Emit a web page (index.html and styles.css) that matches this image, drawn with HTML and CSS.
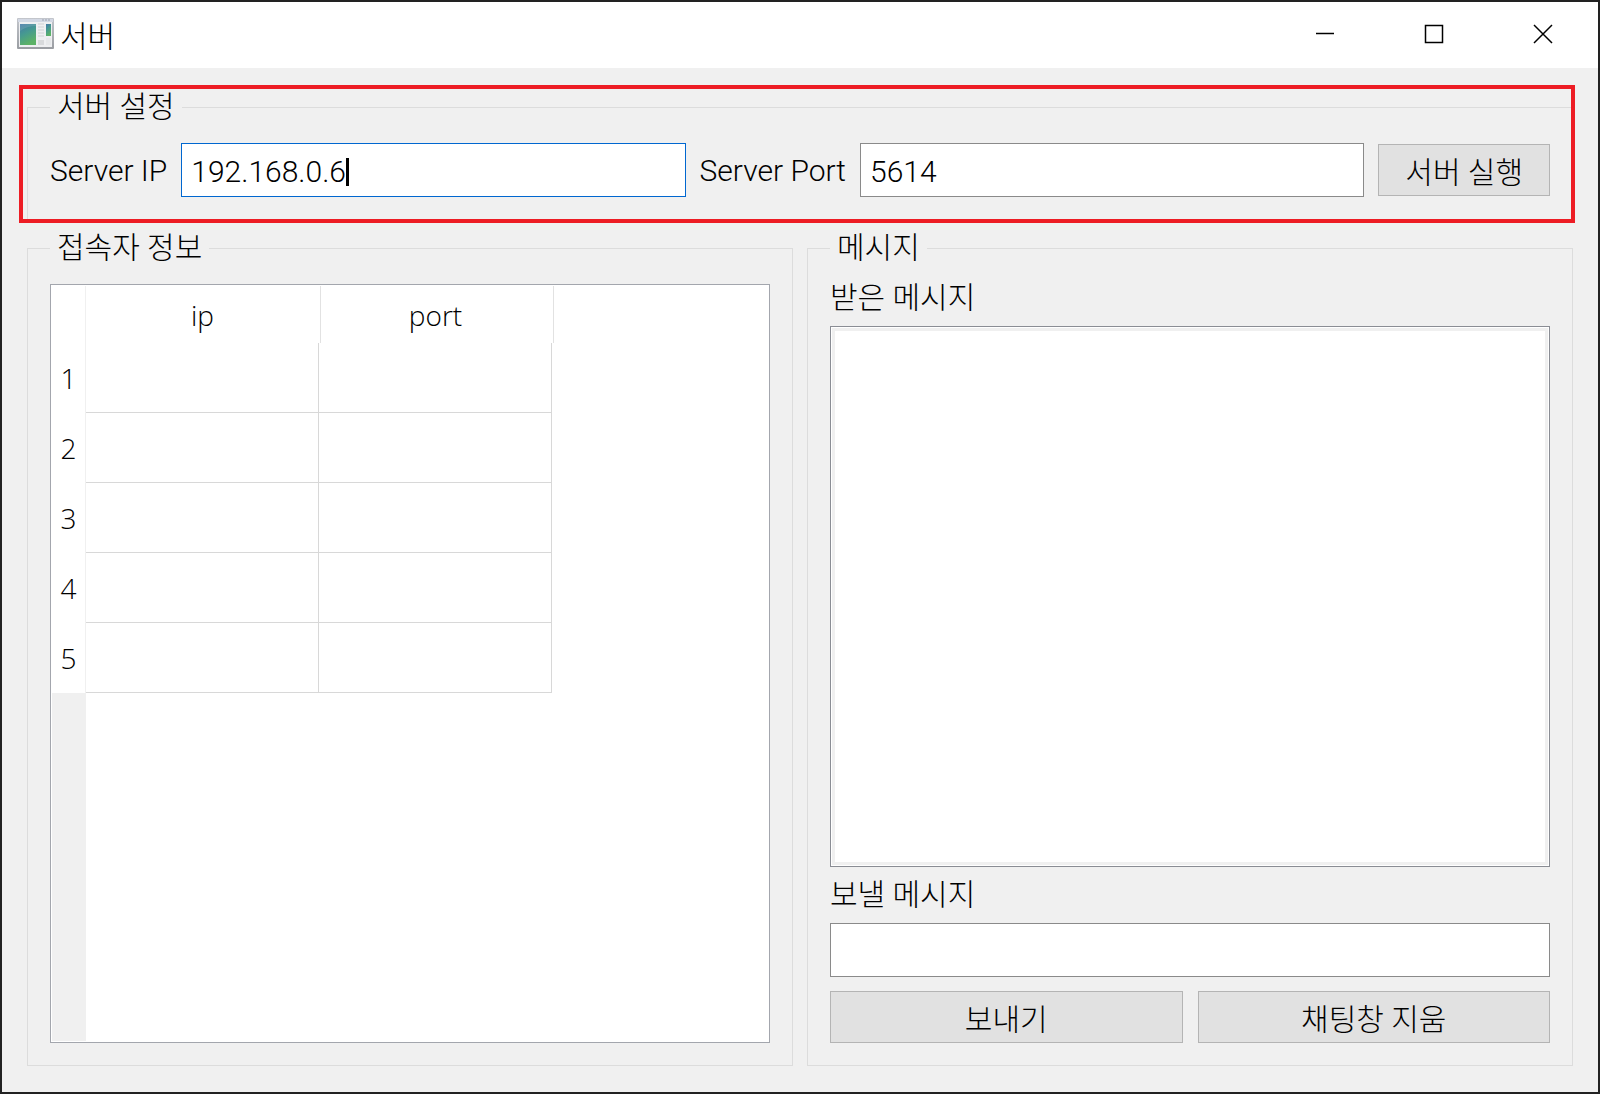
FILE: index.html
```html
<!DOCTYPE html>
<html lang="ko">
<head>
    <meta charset="UTF-8" />
    <meta name="viewport" content="width=device-width, initial-scale=1.0" />
    <title>서버</title>
    <link rel="stylesheet" href="styles.css">
</head>
<body>
    <header class="titlebar">
        <svg class="app-icon" width="38" height="32" viewBox="0 0 38 32" aria-hidden="true">
            <defs>
                <linearGradient id="frame" x1="0" y1="0" x2="0" y2="1">
                    <stop offset="0" stop-color="#c3c6cc" />
                    <stop offset="1" stop-color="#9a9da2" />
                </linearGradient>
                <linearGradient id="screen" x1="0" y1="0" x2="0.4" y2="1">
                    <stop offset="0" stop-color="#4478a8" />
                    <stop offset="0.5" stop-color="#469a90" />
                    <stop offset="1" stop-color="#5cb266" />
                </linearGradient>
            </defs>
            <rect x="0" y="0" width="37" height="31" rx="1" fill="url(#frame)" />
            <rect x="1" y="1" width="35" height="3" fill="#d3d8e4" />
            <path d="M25 2h9" stroke="#9ca2ae" stroke-dasharray="2 1" />
            <rect x="2" y="4" width="33" height="25" fill="#eeeff1" />
            <rect x="3" y="6" width="16" height="21" fill="url(#screen)" />
            <path d="M3 13q7-5 16-5v-2h-16z" fill="#fff" opacity="0.12" />
            <path d="M21 6h6M21 9h6M21 12h6M21 15h6M21 18h6" stroke="#cfd1d4" />
            <rect x="21" y="22" width="6" height="5" fill="#d8dadc" />
            <rect x="29" y="6" width="5" height="12" fill="url(#screen)" />
            <rect x="29" y="20" width="5" height="7" fill="#e6e8ea" />
        </svg>
        <h1>서버</h1>
        <div class="window-buttons">
            <button type="button" aria-label="최소화">
                <svg width="20" height="20" viewBox="0 0 20 20"><path d="M1 9.5h18" /></svg>
            </button>
            <button type="button" aria-label="최대화">
                <svg width="20" height="20" viewBox="0 0 20 20"><rect x="1.5" y="1.5" width="17" height="17" /></svg>
            </button>
            <button type="button" aria-label="닫기">
                <svg width="20" height="20" viewBox="0 0 20 20"><path d="M1 1l18 18M19 1L1 19" /></svg>
            </button>
        </div>
    </header>

    <main>
        <div class="highlight">
            <fieldset>
                <legend>서버 설정</legend>
                <div class="server-row">
                    <label for="server-ip">Server IP</label>
                    <div class="field">
                        <input type="text" id="server-ip" class="active" value="192.168.0.6" autocomplete="off">
                        <span class="caret"></span>
                    </div>
                    <label for="server-port">Server Port</label>
                    <div class="field">
                        <input type="text" id="server-port" value="5614" autocomplete="off">
                    </div>
                    <button type="button" id="start" class="btn">서버 실행</button>
                </div>
            </fieldset>
        </div>

        <div class="panels">
            <fieldset>
                <legend>접속자 정보</legend>
                <div class="client-list">
                    <table>
                        <thead>
                            <tr>
                                <td class="corner"></td>
                                <th scope="col">ip</th>
                                <th scope="col">port</th>
                            </tr>
                        </thead>
                        <tbody>
                            <tr><th scope="row">1</th><td></td><td></td></tr>
                            <tr><th scope="row">2</th><td></td><td></td></tr>
                            <tr><th scope="row">3</th><td></td><td></td></tr>
                            <tr><th scope="row">4</th><td></td><td></td></tr>
                            <tr><th scope="row">5</th><td></td><td></td></tr>
                        </tbody>
                    </table>
                </div>
            </fieldset>

            <fieldset>
                <legend>메시지</legend>
                <div class="messages">
                    <label for="received">받은 메시지</label>
                    <textarea id="received" readonly></textarea>
                    <label for="message">보낼 메시지</label>
                    <input type="text" id="message" autocomplete="off">
                    <div class="actions">
                        <button type="button" id="send" class="btn">보내기</button>
                        <button type="button" id="clear" class="btn">채팅창 지움</button>
                    </div>
                </div>
            </fieldset>
        </div>
    </main>
</body>
</html>
```

FILE: styles.css
```css
* {
    box-sizing: border-box;
    margin: 0;
    padding: 0;
}

body {
    font-family: Roboto, "Noto Sans CJK KR", sans-serif;
    font-size: 30px;
    font-weight: 300;
    color: #000;
    background: #f0f0f0;
    border: 2px solid #222;
    min-height: 100vh;
    display: flex;
    flex-direction: column;
}

input,
button,
textarea {
    font: inherit;
    color: inherit;
}

.titlebar {
    display: flex;
    align-items: center;
    height: 66px;
    padding: 0 1px 2px 15px;
    background: #fff;
}

.titlebar h1 {
    flex: 1;
    margin-left: 5px;
    font-size: 30px;
    font-weight: 300;
}

.window-buttons {
    display: flex;
}

.window-buttons button {
    display: flex;
    align-items: center;
    justify-content: center;
    width: 109px;
    height: 64px;
    border: none;
    background: none;
}

.window-buttons svg {
    fill: none;
    stroke: #000;
    stroke-width: 1.5;
}

main {
    flex: 1;
    display: flex;
    flex-direction: column;
    gap: 10px;
    padding: 21px 25px 26px;
}

fieldset {
    display: flex;
    flex-direction: column;
    min-width: 0;
    border: 1px solid #dcdcdc;
    padding: 18px 22px 22px;
}

legend {
    padding: 0 7px;
    line-height: 36px;
}

/* red frame around the server settings */
.highlight {
    position: relative;
}

.highlight::after {
    content: "";
    position: absolute;
    inset: -4px -2px -3px -8px;
    border: 4px solid #ed1c24;
    pointer-events: none;
}

.server-row {
    display: flex;
    align-items: center;
    gap: 14px;
}

.field {
    position: relative;
    flex: 1;
}

input {
    display: block;
    width: 100%;
    height: 54px;
    padding: 2px 9px 0;
    border: 1px solid #8a8a8a;
    background: #fff;
    outline: none;
}

input.active {
    border-color: #0067d0;
}

.caret {
    position: absolute;
    top: 15px;
    left: 165px;
    width: 3px;
    height: 28px;
    background: #000;
}

.btn {
    height: 52px;
    border: 1px solid #b4b4b4;
    background: #e1e1e1;
}

.server-row .btn {
    padding: 0 26px;
}

.panels {
    flex: 1;
    display: grid;
    grid-template-columns: 1fr 1fr;
    gap: 14px;
}

.client-list {
    flex: 1;
    padding: 1px;
    border: 1px solid #a3a6ad;
    background: linear-gradient(#f0f0f0, #f0f0f0) 1px 1px / 34px calc(100% - 2px) no-repeat #fff;
}

table {
    width: 500px;
    table-layout: fixed;
    border-collapse: separate;
    border-spacing: 0;
    font-family: "Open Sans", "Noto Sans", sans-serif;
    font-size: 28px;
}

th {
    font-weight: 350;
    text-align: center;
}

thead th {
    position: relative;
    height: 57px;
}

/* header dividers sit slightly right of the grid lines */
thead th::after {
    content: "";
    position: absolute;
    top: 0;
    right: -2px;
    bottom: 0;
    width: 1px;
    background: #e2e2e2;
}

.corner {
    width: 34px;
    background: #fff;
    border-right: 1px solid #f0f0f0;
}

tbody th {
    background: #fff;
    border-right: 1px solid #f0f0f0;
}

tbody td {
    height: 70px;
    border-right: 1px solid #d8d8d8;
    border-bottom: 1px solid #d8d8d8;
}

.messages {
    flex: 1;
    display: flex;
    flex-direction: column;
    gap: 14px;
}

.messages label {
    line-height: 28px;
}

.messages textarea {
    flex: 1;
    width: 100%;
    padding: 8px;
    border: 1px solid #8a8d94;
    background: #fff;
    box-shadow: inset 0 0 0 1px #fff, inset 0 0 0 4px #f0f0f0;
    resize: none;
    outline: none;
}

.actions {
    display: grid;
    grid-template-columns: 1fr 1fr;
    gap: 15px;
}
```
